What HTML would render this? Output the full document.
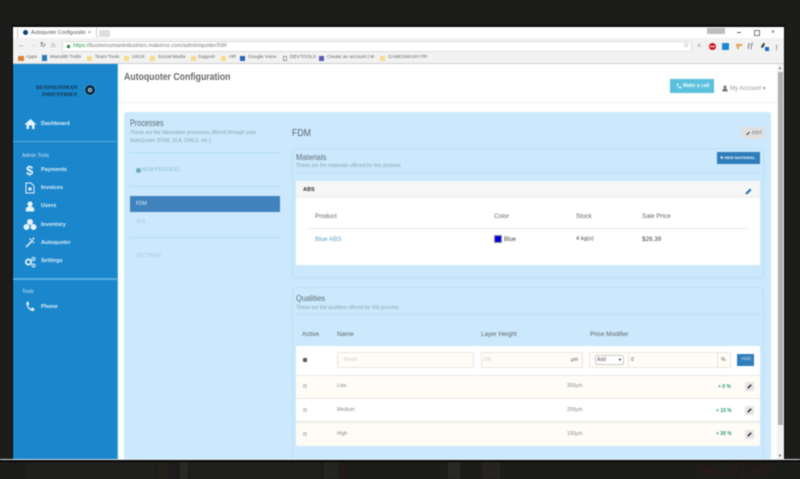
<!DOCTYPE html>
<html lang="en"><head><meta charset="utf-8"><title>Autoquoter Configuration</title>
<style>
html,body{margin:0;padding:0;background:#1c1c1a;width:800px;height:479px;overflow:hidden}
body{font-family:"Liberation Sans",sans-serif;position:relative}
#w{position:absolute;left:0;top:0;width:800px;height:479px;filter:blur(.45px)}
#w div,#w svg{position:absolute}
.t{white-space:nowrap;line-height:1}
.c{transform-origin:0 50%;transform:scaleX(.88)}
.nav{color:#dcedf8;font-size:5.5px;font-weight:bold;left:41px}
.sub{color:#8ea3b0;font-size:5px}
.h{color:#666;font-size:6.3px}
.r{left:296px;width:464px;height:22px}
.s{color:#888;font-size:5px}
.g{color:#2a9a6a;font-size:5px;font-weight:bold}
.pen{width:9px;height:9px;left:745px;background:#e6e6e6;border-radius:1px}
.bm{color:#666;font-size:4.8px;top:56px}
.f{width:5px;height:5px;top:56px;background:#f6dc8c}
.inp{background:#fffcf5;border:1px solid #e8e6e0;border-radius:1px;box-sizing:border-box}
.cb{width:4px;height:4px;background:#d4d4d4;left:303px}
</style></head><body>
<div id="w">
<div style="left:13px;top:27px;width:771px;height:433px;background:#fff;box-shadow:0 -1px 0 1px #0a0a0a"></div>

<!-- tab strip -->
<div style="left:13px;top:27px;width:771px;height:11px;background:#fff"></div>
<div style="left:17px;top:28px;width:78px;height:11px;background:#fff;border-left:1px solid #ccc;border-right:1px solid #ccc"></div>
<div style="left:99px;top:30px;width:11px;height:7px;background:#dedede"></div>
<div style="left:23px;top:30px;width:5px;height:5px;border-radius:50%;background:#123f76"></div>
<div class="t" style="left:31px;top:30.500px;font-size:5.200px;color:#555">Autoquoter Configuratio</div>
<div class="t" style="left:88px;top:30.500px;font-size:5px;color:#555">×</div>
<div style="left:707px;top:28px;width:18px;height:6px;background:#bdbdbd"></div>
<div style="left:737px;top:32px;width:4px;height:1px;background:#666"></div>
<div style="left:754px;top:30px;width:4px;height:4px;border:1px solid #777"></div>
<div class="t" style="left:771px;top:28.500px;font-size:7px;color:#555">×</div>

<!-- toolbar -->
<div style="left:13px;top:38px;width:771px;height:15px;background:#f2f2f2"></div>
<div class="t" style="left:18px;top:42px;font-size:7px;color:#666">←</div>
<div class="t" style="left:29px;top:42px;font-size:7px;color:#bbb">→</div>
<div class="t" style="left:40px;top:42px;font-size:7px;color:#555">↻</div>
<div class="t" style="left:51px;top:42px;font-size:7px;color:#555">⌂</div>
<div style="left:62px;top:41px;width:630px;height:11px;background:#fff;border:1px solid #ddd;box-sizing:border-box;border-radius:1px"></div>
<div style="left:67px;top:45px;width:3px;height:3px;background:#1f8a3c"></div>
<div class="t" style="left:73px;top:43.500px;font-size:5.600px;color:#777"><span style="color:#2a9a4a">https://</span>businessmanindustries.makeros.com/admin/quoter/59#</div>
<div class="t" style="left:683px;top:42px;font-size:7px;color:#666">☆</div>
<div class="t" style="left:697px;top:43px;font-size:6px;color:#888">⋏</div>
<div style="left:709px;top:43px;width:7px;height:7px;border-radius:50%;background:#d01020"></div>
<div style="left:710px;top:46px;width:5px;height:1px;background:#fff"></div>
<div style="left:722px;top:43px;width:7px;height:7px;border-radius:1px;background:#1b87d0"></div>
<div style="left:736px;top:44px;width:6px;height:2px;background:#e0a050"></div>
<div style="left:737px;top:46px;width:2px;height:3px;background:#e0a050"></div>
<div class="t" style="left:747px;top:43px;font-size:7px;font-style:italic;color:#333;font-family:'Liberation Serif',serif">ƒf</div>
<div style="left:762px;top:43px;width:2px;height:5px;background:#333;transform:rotate(30deg)"></div>
<div style="left:765px;top:47px;width:4px;height:4px;background:#1b6ab8"></div>
<div style="left:776px;top:45px;width:1px;height:1px;background:#555;box-shadow:0 2px #555,0 4px #555"></div>

<!-- bookmarks -->
<div style="left:13px;top:53px;width:771px;height:11px;background:#f2f2f2;border-bottom:1px solid #d0d0d0;box-sizing:border-box"></div>
<div style="left:18px;top:56px;width:6px;height:5px;background:#d8813c"></div><div class="t bm" style="left:26px">Apps</div>
<div style="left:42px;top:55px;width:5px;height:6px;background:#2c78b8"></div><div class="t bm" style="left:50px">Manulith Trello</div>
<div class="f" style="left:87px"></div><div class="t bm" style="left:95px">Team Tools</div>
<div class="f" style="left:124px"></div><div class="t bm" style="left:132px">UI/UX</div>
<div class="f" style="left:150px"></div><div class="t bm" style="left:158px">Social Media</div>
<div class="f" style="left:191px"></div><div class="t bm" style="left:198px">Support</div>
<div class="f" style="left:221px"></div><div class="t bm" style="left:229px">HR</div>
<div style="left:240px;top:56px;width:5px;height:5px;background:#2a62b8"></div><div class="t bm" style="left:248px">Google Voice</div>
<div style="left:283px;top:56px;width:4px;height:5px;background:#fff;border:1px solid #999;box-sizing:border-box"></div><div class="t bm" style="left:290px">DEVTOOLS</div>
<div style="left:319px;top:56px;width:5px;height:5px;background:#5a5ab8"></div><div class="t bm" style="left:327px">Create an account | M</div>
<div class="f" style="left:380px"></div><div class="t bm" style="left:388px">GAMESMASH PR</div>

<!-- sidebar -->
<div style="left:13px;top:64px;width:105px;height:396px;background:#1a86cb;border-right:1px solid #3fa2e2;box-sizing:border-box"></div>
<div class="t" style="left:36px;top:84.500px;font:bold 5.600px 'Liberation Serif',serif;color:#0f2a40;letter-spacing:.1px">BUSINESSMAN</div>
<div class="t" style="left:42px;top:91.500px;font:bold 5.600px 'Liberation Serif',serif;color:#0f2a40;letter-spacing:.1px">INDUSTRIES</div>
<div style="left:85px;top:85px;width:10px;height:10px;border-radius:50%;background:#0d2c44;box-shadow:0 0 0 1px #3a9ad8"></div>
<div style="left:88px;top:88px;width:4px;height:4px;border-radius:50%;border:1px solid #cfe6f5;box-sizing:border-box"></div>

<svg style="left:24px;top:118px" width="13" height="12" viewBox="0 0 13 12"><path d="M6.5 1 L12.5 6.5 H10.5 V11 H8 V7.5 H5 V11 H2.5 V6.5 H.5 Z" fill="#e6f2fa"/></svg>
<div class="t nav" style="top:121.500px">Dashboard</div>
<div style="left:13px;top:141px;width:104px;height:1px;background:#5aaee2"></div>
<div class="t sub" style="left:22px;top:153.500px;color:#cfe4f2">Admin Tools</div>
<div class="t" style="left:26px;top:164px;font-size:13px;font-weight:bold;color:#e6f2fa">$</div>
<div class="t nav" style="top:168px">Payments</div>
<svg style="left:25px;top:182px" width="10" height="12" viewBox="0 0 10 12"><path d="M1 1H6L9 4V11H1Z" fill="none" stroke="#e6f2fa"/><rect x="3.5" y="5.5" width="3" height="3" fill="#e6f2fa"/></svg>
<div class="t nav" style="top:186px">Invoices</div>
<svg style="left:25px;top:201px" width="10" height="11" viewBox="0 0 10 11"><circle cx="5" cy="3" r="2.6" fill="#e6f2fa"/><path d="M.8 10.5V8C.8 6.5 2.500 5.500 5 5.500S9.200 6.500 9.200 8V10.500Z" fill="#e6f2fa"/></svg>
<div class="t nav" style="top:204px">Users</div>
<svg style="left:23px;top:218px" width="14" height="13" viewBox="0 0 14 13"><g fill="#e6f2fa"><circle cx="7" cy="4" r="3"/><circle cx="3.500" cy="9" r="3"/><circle cx="10.500" cy="9" r="3"/></g></svg>
<div class="t nav" style="top:222.500px">Inventory</div>
<svg style="left:25px;top:237px" width="10" height="11" viewBox="0 0 10 11"><path d="M1 10 L8 3 M5 1.500 L5.800 3 M9 6 L8 5" stroke="#e6f2fa" stroke-width="1.500" fill="none"/><circle cx="8.500" cy="1.500" r="1" fill="#e6f2fa"/></svg>
<div class="t nav" style="top:241px">Autoquoter</div>
<svg style="left:24px;top:256px" width="12" height="12" viewBox="0 0 12 12"><circle cx="4.500" cy="6" r="2.600" fill="none" stroke="#e6f2fa" stroke-width="1.800"/><circle cx="9.500" cy="3" r="1.500" fill="none" stroke="#e6f2fa"/><circle cx="9.500" cy="9.500" r="1.500" fill="none" stroke="#e6f2fa"/></svg>
<div class="t nav" style="top:259px">Settings</div>
<div style="left:13px;top:278px;width:104px;height:2px;background:#5aaee2"></div>
<div class="t sub" style="left:22px;top:290px;color:#cfe4f2">Tools</div>
<svg style="left:25px;top:301px" width="10" height="11" viewBox="0 0 10 11"><path d="M1.500 1 L3.500 .8 L4.300 3.200 L3 4.200 C3.500 5.800 4.500 7 6 7.800 L7.200 6.500 L9.500 7.800 L9 10 C5 10.500 .800 6 1.500 1Z" fill="#e6f2fa"/></svg>
<div class="t nav" style="top:305px">Phone</div>

<!-- header -->
<div style="left:118px;top:102px;width:659px;height:1px;background:#f2f2f2"></div>
<div class="t c" style="left:124px;top:72px;font-size:10.500px;font-weight:bold;color:#6a6a6a;transform:scaleX(.83)">Autoquoter Configuration</div>
<div style="left:670px;top:79px;width:44px;height:14px;background:#5bc0de"></div>
<div class="t" style="left:683px;top:84px;font-size:5px;font-weight:bold;color:#eef9fc">Make a call</div>
<svg style="left:676px;top:83px" width="6" height="6" viewBox="0 0 10 11"><path d="M1.500 1 L3.500 .8 L4.300 3.200 L3 4.200 C3.500 5.800 4.500 7 6 7.800 L7.200 6.500 L9.500 7.800 L9 10 C5 10.500 .800 6 1.500 1Z" fill="#fff"/></svg>
<svg style="left:722px;top:85px" width="6" height="7" viewBox="0 0 10 11"><circle cx="5" cy="3" r="2.600" fill="#777"/><path d="M.8 10.500V8C.8 6.500 2.500 5.500 5 5.500S9.200 6.500 9.200 8V10.500Z" fill="#777"/></svg>
<div class="t" style="left:730px;top:85.500px;font-size:6px;color:#999">My Account ▾</div>

<!-- panel -->
<div style="left:124px;top:112px;width:647px;height:348px;background:#cbe8fc;border-radius:3px 3px 0 0"></div>
<div class="t c" style="left:130px;top:118.500px;font-size:9px;color:#5f6d76;transform:scaleX(.8)">Processes</div>
<div class="t sub" style="left:130px;top:130.500px">These are the fabrication processes offered through your</div>
<div class="t sub" style="left:130px;top:139px">AutoQuoter (FDM, SLA, DMLS, etc.)</div>
<div style="left:130px;top:152px;width:150px;height:1px;background:#b0dcfa"></div>
<div style="left:136px;top:167.500px;width:5px;height:5px;border-radius:50%;background:#6fa8c4"></div>
<div class="t" style="left:142px;top:168px;font-size:5px;color:#8dbcd4">NEW PROCESS</div>
<div style="left:130px;top:186px;width:150px;height:1px;background:#b0dcfa"></div>
<div style="left:130px;top:196px;width:150px;height:16px;background:#3f82bc"></div>
<div class="t" style="left:136px;top:201.500px;font-size:5px;color:#e4f0f8">FDM</div>
<div class="t" style="left:136px;top:219.500px;font-size:5px;color:#a4c8dc">SLA</div>
<div style="left:130px;top:237px;width:150px;height:1px;background:#b0dcfa"></div>
<div class="t" style="left:136px;top:253.500px;font-size:5px;color:#a4c8dc">SETTINGS</div>

<div class="t c" style="left:292px;top:128px;font-size:10.500px;color:#5a6670;transform:scaleX(.83)">FDM</div>
<div style="left:742px;top:127px;width:23px;height:12px;background:#e0e0e0"></div>
<div class="t" style="left:752px;top:131px;font-size:4.500px;color:#666">EDIT</div>
<div style="left:746px;top:133px;width:4px;height:1px;background:#333;transform:rotate(-45deg)"></div>

<!-- materials -->
<div style="left:292px;top:148px;width:472px;height:130px;border:1px solid #bfe0f5;border-radius:3px;box-sizing:border-box"></div>
<div class="t c" style="left:296px;top:153px;font-size:8.500px;color:#5f6d76;transform:scaleX(.88)">Materials</div>
<div class="t sub" style="left:296px;top:164px">These are the materials offered for this process</div>
<div style="left:296px;top:172px;width:464px;height:1px;background:#bfe0f5"></div>
<div style="left:717px;top:152px;width:43px;height:12px;background:#2f7dbb"></div>
<div class="t" style="left:720px;top:156px;font-size:4px;font-weight:bold;color:#e8f2fa">✚ NEW MATERIAL</div>
<div style="left:296px;top:181px;width:464px;height:84px;background:#fff"></div>
<div style="left:296px;top:181px;width:464px;height:17px;background:#f6f6f6;border-bottom:1px solid #eee;box-sizing:border-box"></div>
<div class="t" style="left:303px;top:187.500px;font-size:5.500px;font-weight:bold;color:#333">ABS</div>
<svg style="left:745px;top:188px" width="7" height="7" viewBox="0 0 7 7"><path d="M.5 6.500 L1 4.500 L5 .5 L6.500 2 L2.500 6Z" fill="#2a6fb0"/></svg>
<div class="t h" style="left:315px;top:213.500px">Product</div>
<div class="t h" style="left:494px;top:213.500px">Color</div>
<div class="t h" style="left:576px;top:213.500px">Stock</div>
<div class="t h" style="left:642px;top:213.500px">Sale Price</div>
<div style="left:308px;top:228px;width:440px;height:1px;background:#ece9e2"></div>
<div class="t" style="left:315px;top:236.500px;font-size:6.300px;color:#5ba8c4">Blue ABS</div>
<div style="left:494px;top:235px;width:8px;height:8px;background:#0000e0;border:1px solid #999;box-sizing:border-box"></div>
<div class="t" style="left:504px;top:236.500px;font-size:6px;color:#444">Blue</div>
<div class="t" style="left:576px;top:236.500px;font-size:5.800px;color:#444">4 kg(s)</div>
<div class="t" style="left:642px;top:236.500px;font-size:6.300px;color:#444">$26.39</div>

<!-- qualities -->
<div style="left:292px;top:287px;width:472px;height:173px;border:1px solid #bfe0f5;border-bottom:0;border-radius:3px 3px 0 0;box-sizing:border-box"></div>
<div class="t c" style="left:296px;top:294px;font-size:8.500px;color:#5f6d76;transform:scaleX(.88)">Qualities</div>
<div class="t sub" style="left:296px;top:306px">These are the qualities offered for this process</div>
<div style="left:296px;top:314px;width:464px;height:1px;background:#bfe0f5"></div>
<div class="t h" style="left:302px;top:331.500px">Active</div>
<div class="t h" style="left:337px;top:331.500px">Name</div>
<div class="t h" style="left:481px;top:331.500px">Layer Height</div>
<div class="t h" style="left:590px;top:331.500px">Price Modifier</div>

<div class="r" style="top:346px;height:100px;background:#ecebe8"></div>
<div class="r" style="top:346px;height:29px;background:#fff"></div>
<div style="left:303px;top:358px;width:4px;height:4px;background:#555;border-radius:1px"></div>
<div class="inp" style="left:337px;top:352px;width:137px;height:16px"></div>
<div class="t" style="left:344px;top:358px;font-size:5px;color:#ccc">Name</div>
<div class="inp" style="left:481px;top:352px;width:102px;height:16px"></div>
<div class="t" style="left:483px;top:358px;font-size:5px;color:#ccc">100</div>
<div class="t" style="left:571px;top:358px;font-size:5px;color:#555">μm</div>
<div class="inp" style="left:589px;top:352px;width:142px;height:16px"></div>
<div style="left:595px;top:355px;width:29px;height:10px;border:1px solid #ccc;border-radius:2px;background:#fff;box-sizing:border-box"></div>
<div class="t" style="left:597px;top:358px;font-size:5px;color:#555">Add</div>
<div class="t" style="left:618px;top:358px;font-size:4px;color:#222">▼</div>
<div style="left:628px;top:352px;width:1px;height:16px;background:#e8e6e0"></div>
<div style="left:717px;top:352px;width:1px;height:16px;background:#e8e6e0"></div>
<div class="t" style="left:631px;top:358px;font-size:5px;color:#555">0</div>
<div class="t" style="left:721px;top:358px;font-size:5px;color:#555">%</div>
<div style="left:737px;top:354px;width:17px;height:12px;background:#2f7dbb"></div>
<div class="t" style="left:741px;top:358px;font-size:4.800px;color:#d8e8f4">ADD</div>

<div class="r" style="top:376px;background:#fffcf5"></div>
<div class="r" style="top:399px;background:#fff"></div>
<div class="r" style="top:423px;height:23px;background:#fffcf5"></div>
<div class="cb" style="top:384px"></div><div class="cb" style="top:408px"></div><div class="cb" style="top:432px"></div>
<div class="t s" style="left:337px;top:384px">Low</div>
<div class="t s" style="left:337px;top:408px">Medium</div>
<div class="t s" style="left:337px;top:431.500px">High</div>
<div class="t s" style="left:567px;top:384px">300μm</div>
<div class="t s" style="left:567px;top:408px">200μm</div>
<div class="t s" style="left:567px;top:431.500px">100μm</div>
<div class="t g" style="left:718px;top:384.500px">+ 0 %</div>
<div class="t g" style="left:716px;top:408.500px">+ 15 %</div>
<div class="t g" style="left:716px;top:432px">+ 30 %</div>
<div class="pen" style="top:382px"></div><div class="pen" style="top:406px"></div><div class="pen" style="top:430px"></div>
<svg style="left:747px;top:384px" width="5" height="5" viewBox="0 0 7 7"><path d="M.5 6.500 L1 4.500 L5 .5 L6.500 2 L2.500 6Z" fill="#222"/></svg>
<svg style="left:747px;top:408px" width="5" height="5" viewBox="0 0 7 7"><path d="M.5 6.500 L1 4.500 L5 .5 L6.500 2 L2.500 6Z" fill="#222"/></svg>
<svg style="left:747px;top:432px" width="5" height="5" viewBox="0 0 7 7"><path d="M.5 6.500 L1 4.500 L5 .5 L6.500 2 L2.500 6Z" fill="#222"/></svg>

<!-- scrollbar -->
<div style="left:771px;top:112px;width:6px;height:348px;background:#fff"></div>
<div style="left:777px;top:64px;width:7px;height:396px;background:#f1f1f1"></div>
<div style="left:778px;top:72px;width:5px;height:353px;background:#b0b0b0"></div>
<div class="t" style="left:778px;top:66px;font-size:4px;color:#666">▲</div>
<div class="t" style="left:778px;top:454px;font-size:4px;color:#444">▼</div>

<!-- desktop background under the window -->
<div style="left:0;top:459px;width:800px;height:1px;background:#dfe9ef"></div>
<div style="left:0;top:460px;width:800px;height:19px;background:#1c1c1a"></div>
<div style="left:0;top:460px;width:800px;height:2px;background:#080808"></div>
<div style="left:25px;top:462px;width:130px;height:17px;background:#1f1f1d"></div>
<div style="left:158px;top:462px;width:10px;height:17px;background:#23211a"></div>
<div style="left:180px;top:462px;width:8px;height:17px;background:#282826"></div>
<div style="left:190px;top:462px;width:130px;height:17px;background:#1f1f1d"></div>
<div style="left:324px;top:462px;width:14px;height:17px;background:#242422"></div>
<div style="left:340px;top:464px;width:5px;height:15px;background:#26181a"></div>
<div style="left:448px;top:462px;width:12px;height:17px;background:#282826"></div>
<div style="left:482px;top:462px;width:18px;height:17px;background:#252422"></div>
<svg style="left:695px;top:462px" width="85" height="17" viewBox="0 0 85 17"><path d="M2 8H24M6 2L20 14M20 2L6 14M30 0L40 14M44 0L30 14M48 0V17M56 4L70 16M70 2L54 14M66 16L78 4" stroke="#2f1a16" stroke-width="1.500" fill="none"/></svg>
</div>
</body></html>
